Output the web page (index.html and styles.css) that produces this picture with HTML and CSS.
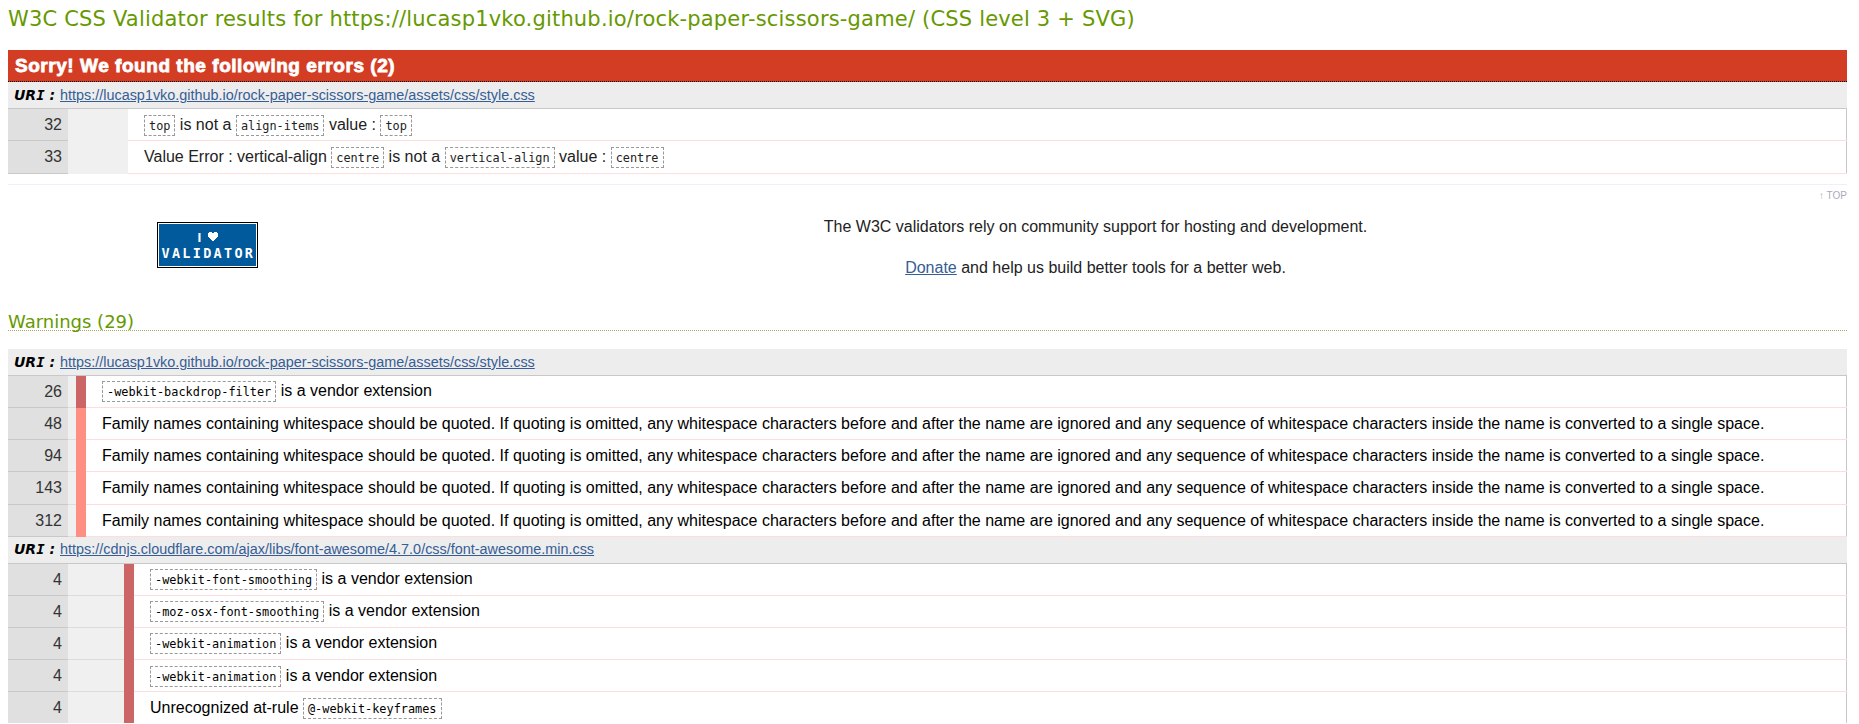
FILE: index.html
```html
<!DOCTYPE html>
<html lang="en">
<head>
<meta charset="utf-8">
<title>W3C CSS Validator results</title>
<link rel="stylesheet" href="styles.css">
</head>
<body>
<main class="results">
<h1 class="title"><span>W3C CSS Validator results for https://lucasp1vko.github.io/rock-paper-scissors-game/ (CSS level 3 + SVG)</span></h1>

<section class="errors">
<h2 class="errors-title"><span>Sorry! We found the following errors (2)</span></h2>
<h3 class="uri"><b>UR<i>I</i> :</b><a href="#">https://lucasp1vko.github.io/rock-paper-scissors-game/assets/css/style.css</a></h3>
<div class="row"><div class="line">32</div><div class="ctx wide"></div><div class="msg err"><code>top</code> is not a <code>align-items</code> value : <code>top</code></div></div>
<div class="row tall"><div class="line">33</div><div class="ctx wide"></div><div class="msg err">Value Error : vertical-align <code>centre</code> is not a <code>vertical-align</code> value : <code>centre</code></div></div>
</section>

<p class="backtop"><a href="#">↑ TOP</a></p>

<section class="donate">
<svg class="badge" width="101" height="46" viewBox="0 0 101 46">
<rect width="101" height="46" fill="#000"/>
<rect x="1" y="1" width="99" height="44" fill="#fff"/>
<rect x="2" y="2" width="97" height="42" fill="#005a9c"/>
<text class="badge-text narrow" x="40.500" y="20">I</text>
<path fill="#fff" shape-rendering="crispEdges" d="M52 10h3v1h2v-1h3v1h1v4h-1v1h-1v1h-1v1h-1v1h-2v-1h-1v-1h-1v-1h-1v-1h-1v-4h1z"/>
<text class="badge-text" x="4.500" y="36" textLength="91.500" lengthAdjust="spacing">VALIDATOR</text>
</svg>
<div class="donate-text">
<p>The W3C validators rely on community support for hosting and development.</p>
<p><a href="#">Donate</a> and help us build better tools for a better web.</p>
</div>
</section>

<section class="warnings">
<h2 class="warnings-title"><span>Warnings (29)</span></h2>
<h3 class="uri"><b>UR<i>I</i> :</b><a href="#">https://lucasp1vko.github.io/rock-paper-scissors-game/assets/css/style.css</a></h3>
<div class="row"><div class="line">26</div><div class="ctx"></div><div class="level dark"></div><div class="msg up"><code>-webkit-backdrop-filter</code> is a vendor extension</div></div>
<div class="row"><div class="line">48</div><div class="ctx"></div><div class="level"></div><div class="msg">Family names containing whitespace should be quoted. If quoting is omitted, any whitespace characters before and after the name are ignored and any sequence of whitespace characters inside the name is converted to a single space.</div></div>
<div class="row"><div class="line">94</div><div class="ctx"></div><div class="level"></div><div class="msg">Family names containing whitespace should be quoted. If quoting is omitted, any whitespace characters before and after the name are ignored and any sequence of whitespace characters inside the name is converted to a single space.</div></div>
<div class="row tall"><div class="line">143</div><div class="ctx"></div><div class="level"></div><div class="msg">Family names containing whitespace should be quoted. If quoting is omitted, any whitespace characters before and after the name are ignored and any sequence of whitespace characters inside the name is converted to a single space.</div></div>
<div class="row"><div class="line">312</div><div class="ctx"></div><div class="level"></div><div class="msg">Family names containing whitespace should be quoted. If quoting is omitted, any whitespace characters before and after the name are ignored and any sequence of whitespace characters inside the name is converted to a single space.</div></div>
<h3 class="uri up"><b>UR<i>I</i> :</b><a href="#">https://cdnjs.cloudflare.com/ajax/libs/font-awesome/4.7.0/css/font-awesome.min.css</a></h3>
<div class="row"><div class="line">4</div><div class="ctx mid"></div><div class="level dark"></div><div class="msg up"><code>-webkit-font-smoothing</code> is a vendor extension</div></div>
<div class="row"><div class="line">4</div><div class="ctx mid"></div><div class="level dark"></div><div class="msg up"><code>-moz-osx-font-smoothing</code> is a vendor extension</div></div>
<div class="row"><div class="line">4</div><div class="ctx mid"></div><div class="level dark"></div><div class="msg up"><code>-webkit-animation</code> is a vendor extension</div></div>
<div class="row"><div class="line">4</div><div class="ctx mid"></div><div class="level dark"></div><div class="msg"><code>-webkit-animation</code> is a vendor extension</div></div>
<div class="row tall"><div class="line">4</div><div class="ctx mid"></div><div class="level dark"></div><div class="msg">Unrecognized at-rule <code>@-webkit-keyframes</code></div></div>
</section>
</main>
</body>
</html>
```
FILE: styles.css
```css
* { box-sizing: border-box; }
html { overflow: hidden; }
body { margin: 0; background: #fff; color: #222; font: 16px/20px "Liberation Sans", Arial, sans-serif; }
h1, h2, h3, p { margin: 0; font-weight: normal; }
a { color: #365d95; }
.results { width: 1839px; height: 723px; margin-left: 8px; overflow: hidden; white-space: nowrap; }
.title { height: 50px; padding-top: 7px; color: #690; font: 21px/24px "DejaVu Sans", Verdana, sans-serif; letter-spacing: .185px; }
.errors-title { height: 32px; padding: 6px 7px 0; background: #d23d24; border-bottom: 1px dotted #000; color: #fff; font-size: 19px; font-weight: bold; line-height: 20px; letter-spacing: .54px; -webkit-text-stroke: .8px #fff; }
.uri { height: 27px; display: flex; padding: 3px 6px 0; background: #ededed; border-bottom: 1px solid #c8c8c8; font-size: 14.42px; line-height: 20px; }
.uri.up { padding-top: 2px; }
.uri b { width: 46px; color: #000; font: italic bold 14px/20px "DejaVu Sans", sans-serif; }
.uri i { font-family: "DejaVu Sans Mono", monospace; }
.row { display: flex; height: 32px; border-right: 1px solid #c8c8c8; }
.row.tall { height: 33px; }
.line { width: 60px; padding: 6px 6px 0 0; background: #e0e0e0; border-bottom: 1px solid #c8c8c8; text-align: right; color: #333; }
.ctx { width: 8px; background: #f0f0f0; border-bottom: 1px solid #dcdcdc; }
.ctx.mid { width: 56px; }
.ctx.wide { width: 60px; border-bottom-color: #f0f0f0; }
.level { width: 10px; background: #ff8f82; }
.level.dark { background: #c66; }
.msg { flex: 1; padding: 6px 0 0 16px; border-bottom: 1px solid #fdd; color: #000; margin-right: -1px; }
.msg.up { padding-top: 5px; }
.msg.err { color: #222; }
code { display: inline-block; height: 21px; padding: 0 4px; border: 1px dashed #999; font: 11.86px/21px "DejaVu Sans Mono", monospace; vertical-align: 0; }
.backtop { height: 38px; margin-top: 10px; border-top: 1px solid #eef; padding-top: 4px; text-align: right; font-size: 10px; line-height: 14px; }
.backtop a { color: #aab; text-decoration: none; }
.donate { display: flex; height: 88px; padding-left: 149px; }
.badge { flex: none; }
.badge-text { fill: #fff; font: bold 13.5px "DejaVu Sans Mono", monospace; }
.badge-text.narrow { font-family: "Liberation Sans", sans-serif; }
.donate-text { flex: none; width: 1675px; text-align: center; line-height: 41px; margin-top: -16px; }
.warnings-title { height: 21px; margin-bottom: 18px; border-bottom: 1px dotted #aa6; color: #690; font: 18px/24px "DejaVu Sans", Verdana, sans-serif; }
```
